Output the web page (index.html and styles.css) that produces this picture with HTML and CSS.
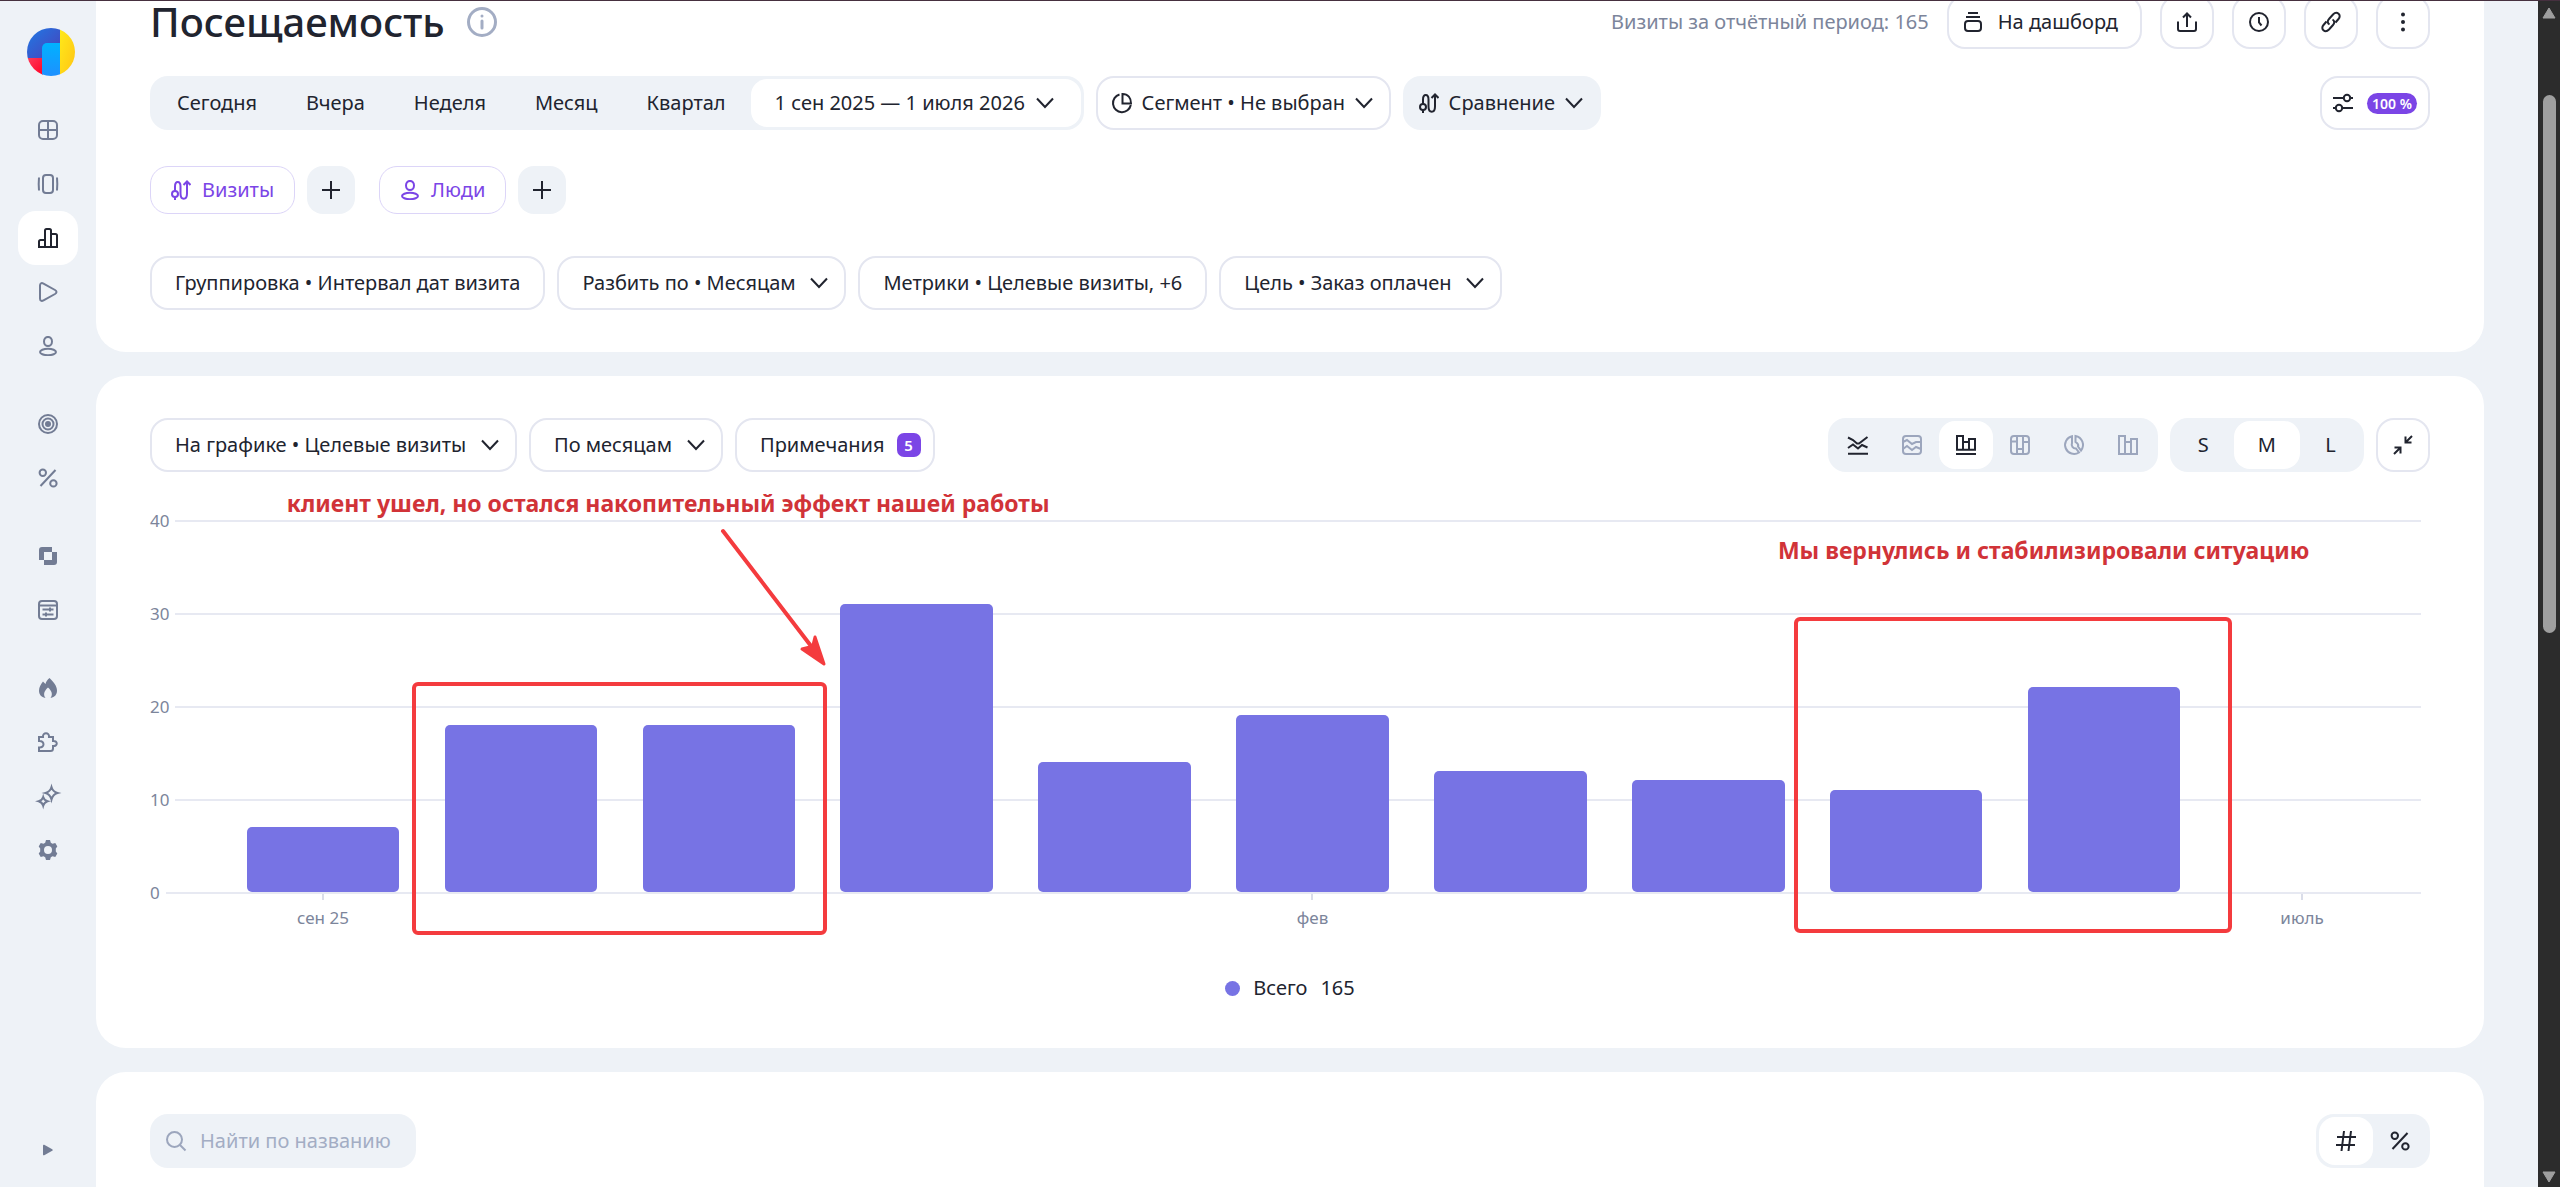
FILE: index.html
```html
<!DOCTYPE html>
<html lang="ru">
<head>
  <meta charset="UTF-8">
  <meta name="viewport" content="width=device-width, initial-scale=1.0">
  <title>Посещаемость</title>
  <link rel="stylesheet" href="styles.css">
</head>
<body>
  <svg class="sprite" aria-hidden="true">
    <symbol id="chevron" viewBox="0 0 18 12"><path d="M1 1.500l8 8.500 8-8.500" /></symbol>
    <symbol id="route" viewBox="0 0 20 20"><circle cx="4" cy="14" r="3" /><path d="M4 17v3M4 11V6.500c0-6 5.500-6 5.500 0v7c0 7 6.500 7 6.500 0V2M12.500 5L16 1.500 19.500 5" /></symbol>
    <symbol id="person" viewBox="0 0 20 20"><ellipse cx="10" cy="5.500" rx="4" ry="4.600" /><ellipse cx="10" cy="16" rx="8" ry="3.200" /></symbol>
    <symbol id="percent" viewBox="0 0 20 20"><circle cx="4.800" cy="4.800" r="3.200" /><circle cx="15.400" cy="15.400" r="3.200" /><path d="M17.500 2L2.500 18" /></symbol>
  </svg>

  <div class="app">
    <nav class="sidebar">
      <a href="#" class="logo" aria-label="Метрика">
        <svg viewBox="0 0 48 48">
          <defs>
            <clipPath id="round"><circle cx="24" cy="24" r="24" /></clipPath>
            <linearGradient id="blue" x1="0" y1="0" x2="1" y2="1"><stop offset="0" stop-color="#1f7ae6" /><stop offset="1" stop-color="#4a3fb8" /></linearGradient>
            <linearGradient id="sky" x1="0" y1="0" x2="0" y2="1"><stop offset="0" stop-color="#00b2ff" /><stop offset="1" stop-color="#1e90ff" /></linearGradient>
            <linearGradient id="yellow" x1="0" y1="0" x2="1" y2="1"><stop offset="0" stop-color="#ffea1a" /><stop offset="1" stop-color="#ffc414" /></linearGradient>
            <linearGradient id="red" x1="0" y1="0" x2="1" y2="1"><stop offset="0" stop-color="#ff3d5c" /><stop offset="1" stop-color="#ff0024" /></linearGradient>
          </defs>
          <g clip-path="url(#round)">
            <rect width="33" height="31" fill="url(#blue)" />
            <rect y="30" width="16" height="18" fill="url(#red)" />
            <path d="M15 48V20a5 5 0 0 1 5-5h13v33z" fill="url(#sky)" />
            <rect x="33" width="15" height="48" fill="url(#yellow)" />
          </g>
        </svg>
      </a>
      <div class="nav-group">
        <a href="#" class="nav-item" aria-label="Сводка"><svg class="icon" viewBox="0 0 20 20"><rect x="1" y="1" width="18" height="18" rx="4" /><path d="M10 1v18M1 10h18" /></svg></a>
        <a href="#" class="nav-item" aria-label="Дашборды"><svg class="icon" viewBox="0 0 20 20"><rect x="5" y="1" width="10" height="18" rx="3" /><path d="M1 3.500q-.6 6.500 0 13M19 3.500q.6 6.500 0 13" /></svg></a>
        <a href="#" class="nav-item active" aria-label="Отчёты"><svg class="icon" viewBox="0 0 20 20"><path d="M1 19v-5.500A1.500 1.500 0 0 1 2.500 12H7V2.500A1.500 1.500 0 0 1 8.500 1h3A1.500 1.500 0 0 1 13 2.500V6h4.500A1.500 1.500 0 0 1 19 7.500V19zM7 12v7M13 6v13" /></svg></a>
        <a href="#" class="nav-item" aria-label="Вебвизор"><svg class="icon" viewBox="0 0 20 20"><path d="M2 3.500C2 1.200 3.500.5 5.500 1.600l11.500 6.400c2 1.200 2 2.800 0 4L5.500 18.400C3.500 19.500 2 18.800 2 16.500z" /></svg></a>
        <a href="#" class="nav-item" aria-label="Посетители"><svg class="icon"><use href="#person" /></svg></a>
      </div>
      <div class="nav-group">
        <a href="#" class="nav-item" aria-label="Цели"><svg class="icon" viewBox="0 0 20 20"><circle cx="10" cy="10" r="9" /><circle cx="10" cy="10" r="5.500" /><circle cx="10" cy="10" r="2" fill="currentColor" /></svg></a>
        <a href="#" class="nav-item" aria-label="Конверсии"><svg class="icon"><use href="#percent" /></svg></a>
      </div>
      <div class="nav-group">
        <a href="#" class="nav-item" aria-label="Сегменты"><svg class="icon solid" viewBox="0 0 20 20"><path d="M4 1h10v5h5v10a3 3 0 0 1-3 3H6v-5H1V4a3 3 0 0 1 3-3zM6 6v8h8V6z" /></svg></a>
        <a href="#" class="nav-item" aria-label="Параметры"><svg class="icon" viewBox="0 0 20 20"><rect x="1" y="1" width="18" height="18" rx="3" /><path d="M1 5.500h18M4.500 9.500h11M4.500 14.500h11M12 7.500v4M8 12.500v4" /></svg></a>
      </div>
      <div class="nav-group">
        <a href="#" class="nav-item" aria-label="Карты"><svg class="icon solid" viewBox="0 0 20 20"><path d="M7.500 20C3 19 1 16.500 1 12.500 1 9 3 6 5 3.500L7.500 6C8 3.500 9.500 1.500 11.500 0c4 4 7.500 8 7.500 12.500 0 4-2 6.500-6.500 7.500 2.500-3.500 1.500-7-2.500-10.500-4 3.500-5 7-2.500 10.500z" /></svg></a>
        <a href="#" class="nav-item" aria-label="Интеграции"><svg class="icon" viewBox="0 0 20 20"><path d="M1 19v-3.500c6 .5 6-7 0-6.500V5h4c-.5-5 6.500-5 6 0h4v4c5-.5 5 5.500 0 5v2.500A2.500 2.500 0 0 1 12.500 19z" /></svg></a>
        <a href="#" class="nav-item" aria-label="Нейросети"><svg class="icon" viewBox="0 0 20 20"><path d="M13.500 1q1.400 4.800 6 6-4.600 1.200-6 6.500-1.400-5.300-6-6.500 4.600-1.200 6-6zM5.200 11q1 3.300 4.300 4.300-3.300 1-4.300 4.500-1-3.500-4.500-4.500 3.500-1 4.500-4.300z" /></svg></a>
        <a href="#" class="nav-item" aria-label="Настройки"><svg class="icon solid" viewBox="0 0 20 20"><path d="M8 0h4l.8 2.800 1.700 1 2.800-.8 2 3.500-1.500 2v3l1.500 2-2 3.500-2.800-.8-1.700 1L12 20H8l-.8-2.800-1.700-1-2.800.8-2-3.500 1.500-2v-3L.7 6.500l2-3.500 2.800.8 1.700-1zM10 6a4 4 0 1 0 0 8 4 4 0 0 0 0-8z" /></svg></a>
      </div>
      <button class="nav-item nav-expand" aria-label="Развернуть меню"><svg class="icon solid" viewBox="0 0 20 20"><path d="M5 5.500c0-.8.500-1 1.200-.7l8 4.400c.8.500.8 1.100 0 1.600l-8 4.400c-.7.300-1.200.1-1.200-.7z" /></svg></button>
    </nav>

    <main class="content">
      <section class="card card-head">
        <div class="row">
          <h1>Посещаемость</h1>
          <button class="info" aria-label="О показателе"><svg class="icon" viewBox="0 0 30 30"><circle cx="15" cy="15" r="13.500" /><path d="M15 14v7M15 9v.1" stroke-linecap="round" /></svg></button>
          <div class="row-end head-actions">
            <span class="muted">Визиты за отчётный период: 165</span>
            <button class="btn btn-dashboard"><svg class="icon" viewBox="0 0 20 20"><path d="M5 1h10M3 5h14" /><rect x="2" y="9" width="16" height="10" rx="3" /></svg>На дашборд</button>
            <button class="btn btn-icon" aria-label="Экспорт"><svg class="icon" viewBox="0 0 20 20"><path d="M1 9.500V17a2 2 0 0 0 2 2h14a2 2 0 0 0 2-2V9.500M10 15V2M6 5.500l4-4 4 4" /></svg></button>
            <button class="btn btn-icon" aria-label="История"><svg class="icon" viewBox="0 0 20 20"><circle cx="10" cy="10" r="9" /><path d="M10 5v5.500l2.500 3" /></svg></button>
            <button class="btn btn-icon" aria-label="Ссылка"><svg class="icon" viewBox="0 0 20 20"><path d="M8.500 12.500C6 11 6.500 8.500 8 7l4-4.500c4-4 9 .5 5.500 4.500l-3 3.500M11.500 7.500C14 9 13.500 11.500 12 13l-4 4.500c-4 4-9-.5-5.500-4.500l3-3.500" /></svg></button>
            <button class="btn btn-icon" aria-label="Ещё"><svg class="icon solid" viewBox="0 0 20 20"><circle cx="10" cy="2.500" r="2" /><circle cx="10" cy="10" r="2" /><circle cx="10" cy="17.500" r="2" /></svg></button>
          </div>
        </div>

        <div class="row row-period">
          <div class="segmented periods">
            <button>Сегодня</button>
            <button>Вчера</button>
            <button>Неделя</button>
            <button>Месяц</button>
            <button>Квартал</button>
            <span class="select select-range"><select aria-label="Период"><option>1 сен 2025 — 1 июля 2026</option></select><svg class="chevron"><use href="#chevron" /></svg></span>
          </div>
          <span class="select outlined with-icon"><svg class="icon" viewBox="0 0 20 20"><path d="M7.500 1.500A9 9 0 1 0 18.800 12" /><path d="M10.500 1v9.500H19C19 5 16 1 10.500 1z" /></svg><select aria-label="Сегмент"><option>Сегмент • Не выбран</option></select><svg class="chevron"><use href="#chevron" /></svg></span>
          <span class="select filled with-icon"><svg class="icon"><use href="#route" /></svg><select aria-label="Сравнение"><option>Сравнение</option></select><svg class="chevron"><use href="#chevron" /></svg></span>
          <button class="btn btn-accuracy row-end" aria-label="Точность 100 %"><svg class="icon" viewBox="0 0 20 20"><path d="M0 5h10M18 5h2M0 15h2M10 15h10" /><circle cx="14" cy="5" r="3.200" /><circle cx="6" cy="15" r="3.200" /></svg><span class="badge-percent">100 %</span></button>
        </div>

        <div class="row row-chips">
          <button class="chip"><svg class="icon"><use href="#route" /></svg>Визиты</button>
          <button class="chip-add" aria-label="Добавить условие визитов"><svg class="icon" viewBox="0 0 20 20"><path d="M10 1v18M1 10h18" /></svg></button>
          <button class="chip chip-people"><svg class="icon"><use href="#person" /></svg>Люди</button>
          <button class="chip-add" aria-label="Добавить условие людей"><svg class="icon" viewBox="0 0 20 20"><path d="M10 1v18M1 10h18" /></svg></button>
        </div>

        <div class="row row-grouping">
          <button class="btn">Группировка • Интервал дат визита</button>
          <span class="select outlined"><select aria-label="Разбить по"><option>Разбить по • Месяцам</option></select><svg class="chevron"><use href="#chevron" /></svg></span>
          <button class="btn">Метрики • Целевые визиты, +6</button>
          <span class="select outlined"><select aria-label="Цель"><option>Цель • Заказ оплачен</option></select><svg class="chevron"><use href="#chevron" /></svg></span>
        </div>
      </section>

      <section class="card">
        <div class="row">
          <span class="select outlined"><select aria-label="На графике"><option>На графике • Целевые визиты</option></select><svg class="chevron"><use href="#chevron" /></svg></span>
          <span class="select outlined"><select aria-label="Детализация"><option>По месяцам</option></select><svg class="chevron"><use href="#chevron" /></svg></span>
          <button class="btn btn-notes">Примечания<span class="badge-count">5</span></button>

          <div class="segmented chart-types row-end">
            <button aria-label="Линии"><svg class="icon" viewBox="0 0 20 20"><path d="M0 2.500l5 2.500 4 3.500h2L19.500 2M0 13l5-3.500 5 4 4-3.500 5.500 2.500M0 18.800h20" /></svg></button>
            <button class="dim" aria-label="Области"><svg class="icon" viewBox="0 0 20 20"><rect x="1" y="1" width="18" height="18" rx="3" /><path d="M1 7l4-2 5 4 4-2h5M1 14l4-3 5 4 4-3 5 2" /></svg></button>
            <button class="active" aria-label="Колонки"><svg class="icon" viewBox="0 0 20 20"><path d="M1 14.500V1h6v13.500M7 7h6M13 14.500V4h6v10.500M0 14.800h20M0 19h20" /></svg></button>
            <button class="dim" aria-label="Колонки с накоплением"><svg class="icon" viewBox="0 0 20 20"><rect x="1" y="1" width="18" height="18" rx="3" /><path d="M7 1v18M13 1v18M1 6.500h6M7 14h6M13 7h6" /></svg></button>
            <button class="dim" aria-label="Круговая"><svg class="icon" viewBox="0 0 20 20"><path d="M8 1.200a9 9 0 1 0 7 16.300l-3-4a4 4 0 0 1-4-5.500z" /><path d="M11.500 1a9 9 0 0 1 5.500 14.500l-3-4c1-2 0-3-2.500-4.500z" /></svg></button>
            <button class="dim" aria-label="Гистограмма"><svg class="icon" viewBox="0 0 20 20"><path d="M1 19V1h6v18M7 7h6M13 19V4h6v15M0 19h20" /></svg></button>
          </div>
          <div class="segmented sizes">
            <button>S</button>
            <button class="active">M</button>
            <button>L</button>
          </div>
          <button class="btn btn-icon" aria-label="Свернуть график"><svg class="icon" viewBox="0 0 20 20"><path d="M19 1l-6 6M12.500 1.500v6h6M1 19l6-6M1.500 12.500h6v6" /></svg></button>
        </div>

        <div class="chart">
          <div class="plot">
            <div class="scale">
              <div class="scale-row">40</div>
              <div class="scale-row">30</div>
              <div class="scale-row">20</div>
              <div class="scale-row">10</div>
              <div class="scale-row">0</div>
            </div>
            <div class="bars">
              <div class="bar" style="height: 17.5%"></div>
              <div class="bar" style="height: 45%"></div>
              <div class="bar" style="height: 45%"></div>
              <div class="bar" style="height: 77.5%"></div>
              <div class="bar" style="height: 35%"></div>
              <div class="bar" style="height: 47.5%"></div>
              <div class="bar" style="height: 32.5%"></div>
              <div class="bar" style="height: 30%"></div>
              <div class="bar" style="height: 27.5%"></div>
              <div class="bar" style="height: 55%"></div>
            </div>
          </div>
          <div class="axis">
            <span class="tick tick-first">сен 25</span>
            <span class="tick tick-middle">фев</span>
            <span class="tick tick-last">июль</span>
          </div>
          <div class="legend"><span class="dot"></span><span>Всего</span><span>165</span></div>

          <div class="note note-left">клиент ушел, но остался накопительный эффект нашей работы</div>
          <div class="note note-right">Мы вернулись и стабилизировали ситуацию</div>
          <div class="frame frame-left"></div>
          <div class="frame frame-right"></div>
          <svg class="arrow" viewBox="0 0 108 142"><path class="arrow-line" d="M3 5l88 115" /><path class="arrow-head" d="M104 138L82 123l8-2 3-2 2-8z" /></svg>
        </div>
      </section>

      <section class="card card-table">
        <div class="row">
          <label class="search">
            <svg class="icon" viewBox="0 0 20 20"><circle cx="8.500" cy="8.500" r="7.500" /><path d="M14 14l5.500 5.500" /></svg>
            <input type="text" placeholder="Найти по названию" aria-label="Найти по названию">
          </label>
          <div class="segmented chart-types row-end">
            <button class="active" aria-label="Числа"><svg class="icon" viewBox="0 0 20 20"><path d="M8 0L5.500 20M15 0l-2.500 20M1 6h19M0 14h19" /></svg></button>
            <button aria-label="Проценты"><svg class="icon"><use href="#percent" /></svg></button>
          </div>
        </div>
      </section>
    </main>

    <div class="scrollbar" aria-hidden="true">
      <svg viewBox="0 0 14 12"><path d="M7 1L1 11h12z" /></svg>
      <div class="scrollbar-track"><div class="scrollbar-thumb"></div></div>
      <svg viewBox="0 0 14 12"><path d="M7 11L1 1h12z" /></svg>
    </div>
  </div>
</body>
</html>
```
FILE: styles.css
```css
* {
  box-sizing: border-box;
}

body {
  margin: 0;
  height: 100vh;
  overflow: hidden;
  background-color: #eef2f7;
  color: #21242f;
  font-family: "Noto Sans", sans-serif;
  font-size: 20px;
  line-height: 24px;
}

button,
select,
input {
  font: inherit;
  color: inherit;
  margin: 0;
  border: none;
  background: none;
}

button {
  padding: 0;
  cursor: pointer;
  white-space: nowrap;
}

.sprite {
  display: none;
}

.icon {
  width: 20px;
  height: 20px;
  flex: none;
  fill: none;
  stroke: currentColor;
  stroke-width: 2;
  overflow: visible;
}

.icon.solid {
  fill: currentColor;
  fill-rule: evenodd;
  stroke: none;
}

.app {
  display: flex;
  height: 100vh;
  border-top: 1px solid #46303f;
}

/* sidebar */

.sidebar {
  width: 96px;
  flex: none;
  display: flex;
  flex-direction: column;
  align-items: center;
  gap: 24px;
  padding: 27px 0 10px;
  color: #727c94;
}

.logo {
  width: 48px;
  height: 48px;
  margin: 0 0 3px 6px;
}

.nav-item {
  width: 60px;
  height: 54px;
  border-radius: 18px;
  display: flex;
  align-items: center;
  justify-content: center;
  color: #727c94;
}

.nav-item.active {
  background-color: #fff;
  color: #21242f;
}

.nav-expand {
  margin-top: auto;
}

/* cards */

.content {
  flex: 1;
  min-width: 0;
  display: flex;
  flex-direction: column;
  gap: 24px;
  margin-right: 54px;
  overflow: hidden;
}

.card {
  background-color: #fff;
  border-radius: 30px;
  padding: 42px 54px;
  flex: none;
}

.card-head {
  margin-top: -48px;
}

.card-table {
  flex: 1;
  border-radius: 30px 30px 0 0;
}

.row {
  display: flex;
  align-items: center;
  gap: 12px;
}

.row-end {
  margin-left: auto;
}

.row-period {
  margin-top: 27px;
}

.row-chips {
  margin-top: 36px;
}

.row-grouping {
  margin-top: 42px;
}

h1 {
  margin: 0;
  font-size: 40px;
  line-height: 52px;
  font-weight: 500;
}

.info {
  display: flex;
  margin-left: 10px;
  color: #a3adc4;
}

.info .icon {
  width: 30px;
  height: 30px;
  stroke-width: 3;
}

.head-actions {
  display: flex;
  align-items: center;
  gap: 18px;
}

.muted {
  color: #7c859b;
}

/* controls */

.btn {
  height: 54px;
  padding: 0 23px;
  border: 2px solid #e4e6f0;
  border-radius: 18px;
  background-color: #fff;
  display: flex;
  align-items: center;
  justify-content: center;
}

.btn-icon {
  width: 54px;
  padding: 0;
}

.btn-dashboard {
  gap: 15px;
  padding: 0 22px 0 14px;
}

.btn-accuracy {
  gap: 14px;
  padding: 0 11px;
}

.btn-notes {
  gap: 12px;
  padding-right: 12px;
}

.badge-percent {
  background-color: #7b45e6;
  color: #fff;
  border-radius: 11px;
  padding: 0 5px;
  font-size: 14px;
  font-weight: 600;
  line-height: 21px;
}

.badge-count {
  width: 24px;
  border-radius: 7px;
  background-color: #7b45e6;
  color: #fff;
  font-size: 15px;
  font-weight: 600;
  text-align: center;
}

.select {
  display: grid;
  align-items: center;
  height: 54px;
  border-radius: 18px;
}

.select > * {
  grid-area: 1 / 1;
}

.select select {
  appearance: none;
  height: 100%;
  padding: 0 51px 0 25px;
  border-radius: 18px;
  cursor: pointer;
}

.chevron {
  width: 18px;
  height: 12px;
  justify-self: end;
  margin-right: 18px;
  fill: none;
  stroke: #21242f;
  stroke-width: 2;
  pointer-events: none;
}

.outlined select {
  border: 2px solid #e4e6f0;
  padding: 0 48px 0 23px;
}

.filled {
  background-color: #eef2f7;
}

.with-icon .icon {
  margin-left: 16px;
}

.with-icon select {
  padding: 0 45px 0 46px;
}

.outlined.with-icon select {
  padding: 0 43px 0 44px;
}

.segmented {
  display: flex;
  height: 54px;
  padding: 3px;
  border-radius: 18px;
  background-color: #eef2f7;
}

.periods {
  gap: 1px;
}

.segmented button {
  padding: 0 24px;
  border-radius: 16px;
}

.sizes button {
  min-width: 61px;
}

.segmented .active,
.select-range {
  background-color: #fff;
}

.select-range {
  height: 48px;
  border-radius: 16px;
}

.select-range .chevron {
  margin-right: 27px;
}

.select-range select {
  padding: 0 55px 0 24px;
}

.segmented.chart-types button {
  width: 54px;
  padding: 0;
  display: flex;
  align-items: center;
  justify-content: center;
}

.segmented .dim {
  color: #9ca6bd;
}

.chip {
  height: 48px;
  padding: 0 20px;
  border: 1px solid #dcd5f8;
  border-radius: 18px;
  background-color: #fff;
  color: #7b45e6;
  display: flex;
  align-items: center;
  gap: 11px;
}

.chip-people {
  margin-left: 12px;
}

.chip-add {
  width: 48px;
  height: 48px;
  border-radius: 16px;
  background-color: #eef2f7;
  display: flex;
  align-items: center;
  justify-content: center;
}

/* chart */

.chart {
  position: relative;
  padding-top: 40px;
}

.plot {
  display: grid;
  margin-right: 9px;
}

.plot > * {
  grid-area: 1 / 1;
}

.scale {
  display: flex;
  flex-direction: column;
  gap: 75px;
}

.scale-row {
  display: flex;
  align-items: center;
  gap: 6px;
  font-size: 17px;
  line-height: 18px;
  color: #7c859b;
}

.scale-row::after {
  content: "";
  flex: 1;
  height: 2px;
  background-color: #e7e9f2;
}

.bars {
  display: grid;
  grid-template-columns: repeat(11, 1fr);
  align-items: end;
  margin: 8px 0 10px 54px;
  padding: 0 20px;
}

.bar {
  width: 77%;
  justify-self: center;
  border-radius: 5px;
  background-color: #7773e4;
}

.axis {
  display: grid;
  grid-template-columns: repeat(11, 1fr);
  margin: -10px 9px 0 54px;
  padding: 0 20px;
  border-top: 2px solid #dadde9;
  font-size: 17px;
  color: #7c859b;
}

.tick {
  display: flex;
  flex-direction: column;
  align-items: center;
  gap: 6px;
}

.tick::before {
  content: "";
  width: 2px;
  height: 6px;
  background-color: #dadde9;
}

.tick-first {
  grid-column: 1;
}

.tick-middle {
  grid-column: 6;
}

.tick-last {
  grid-column: 11;
}

.legend {
  display: flex;
  align-items: center;
  justify-content: center;
  gap: 13px;
  margin-top: 40px;
  line-height: 36px;
}

.dot {
  width: 15px;
  height: 15px;
  border-radius: 50%;
  background-color: #7773e4;
}

/* annotations over the chart */

.note {
  position: absolute;
  font-size: 23px;
  line-height: 30px;
  font-weight: 700;
  color: #d13338;
  white-space: nowrap;
}

.note-left {
  left: 6%;
  top: 16px;
}

.note-right {
  left: 71.4%;
  top: 63px;
}

.frame {
  position: absolute;
  border: 4px solid #f43b3e;
  border-radius: 6px;
}

.frame-left {
  left: 11.5%;
  top: 210px;
  width: 18.2%;
  height: 253px;
}

.frame-right {
  left: 72.1%;
  top: 145px;
  width: 19.2%;
  height: 316px;
}

.arrow {
  position: absolute;
  left: 25%;
  top: 54px;
  width: 108px;
  height: 142px;
  fill: #f43b3e;
  stroke: #f43b3e;
  stroke-linecap: round;
  stroke-linejoin: round;
}

.arrow-line {
  stroke-width: 4;
}

.arrow-head {
  stroke-width: 3;
}

/* search */

.search {
  display: flex;
  align-items: center;
  gap: 14px;
  width: 266px;
  height: 54px;
  padding: 0 16px;
  border-radius: 18px;
  background-color: #eef2f7;
  color: #9ca6bd;
}

.search input {
  flex: 1;
  min-width: 0;
  padding: 0;
  outline: none;
  color: #21242f;
}

.search input::placeholder {
  color: #a3adc4;
  opacity: 1;
}

/* scrollbar */

.scrollbar {
  width: 22px;
  flex: none;
  display: flex;
  flex-direction: column;
  align-items: center;
  justify-content: space-between;
  padding: 6px 0 4px;
  background-color: #2c2c2c;
}

.scrollbar svg {
  width: 14px;
  height: 12px;
  fill: #9f9f9f;
  stroke: #9f9f9f;
  stroke-linejoin: round;
}

.scrollbar-track {
  flex: 1;
  width: 13px;
  padding-top: 76px;
}

.scrollbar-thumb {
  height: 50%;
  border-radius: 7px;
  background-color: #9f9f9f;
}
```
